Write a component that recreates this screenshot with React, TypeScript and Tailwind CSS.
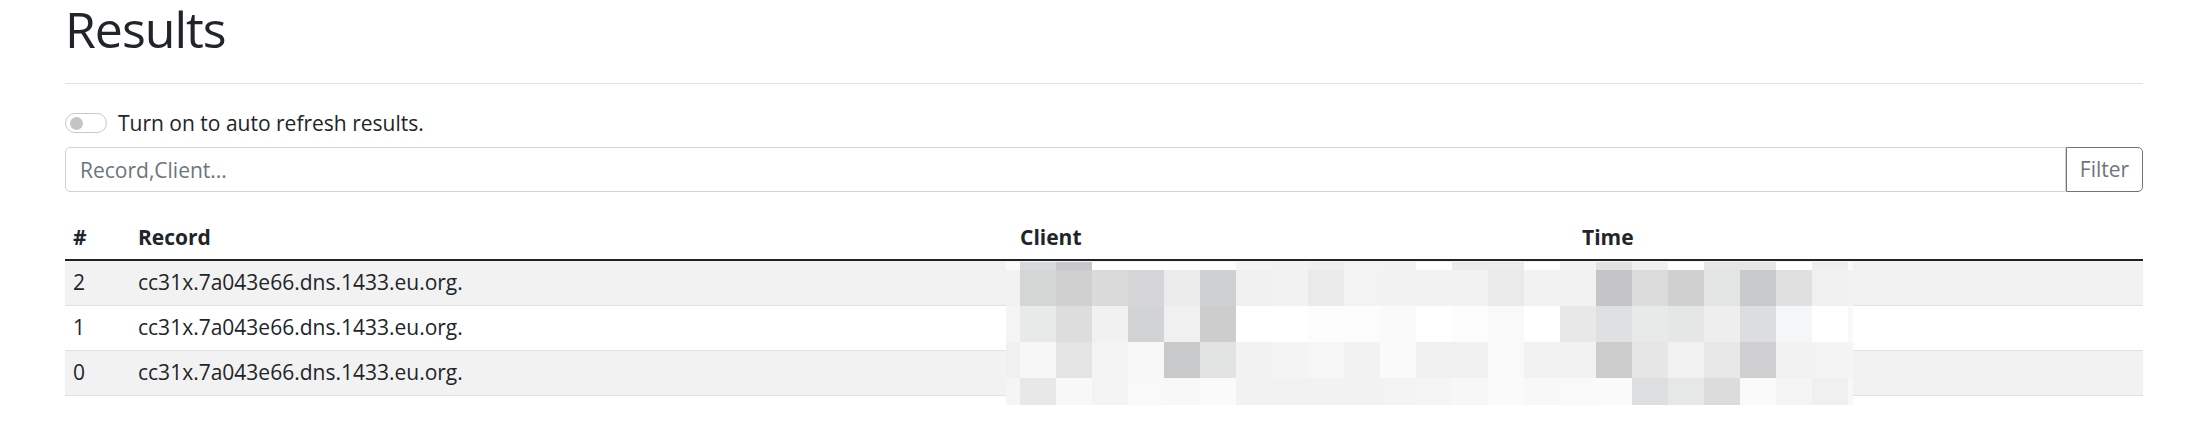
import { useState } from 'react';

// pixelated client/time area: left sliver, 23 cells, right sliver
const mosaic: string[][] = [
  ['fafafa', 'd8d9db', 'c8c8ca', 'ffffff', 'ffffff', 'ffffff', 'ffffff', 'f5f5f5', 'f3f3f3', 'efefef', 'f3f3f3', 'f3f3f3', 'ffffff', 'ececec', 'ececec', 'ffffff', 'f3f3f3', 'e2e2e2', 'f0f0f0', 'ffffff', 'e5e6e5', 'e6e6e6', 'ffffff', 'eeeeee', 'fafafa'],
  ['f2f2f2', 'd4d5d5', 'd0d0d0', 'dadada', 'd5d5d7', 'ececec', 'cfd0d2', 'f0f0f0', 'f2f2f2', 'eaeaea', 'f3f3f3', 'f2f2f2', 'f2f2f2', 'f2f2f2', 'eaeaea', 'f2f2f2', 'f2f2f2', 'c5c5c7', 'dcdcdc', 'd0d0d0', 'e3e5e4', 'c8c9cb', 'e0e0e0', 'f0f0f0', 'f2f2f2'],
  ['f5f5f5', 'e8eae9', 'dddddd', 'f0f1f0', 'd2d3d5', 'f0f0f0', 'cdcdcd', 'ffffff', 'ffffff', 'fcfcfc', 'fcfcfc', 'fafafa', 'ffffff', 'fcfcfc', 'f8f9f8', 'ffffff', 'e8e8e8', 'dfe0e2', 'e8eae9', 'e5e7e6', 'eeeeee', 'dcdde0', 'f5f6f8', 'ffffff', 'f8f9f8'],
  ['f0f0f0', 'f7f7f7', 'e4e4e4', 'f3f3f3', 'f8f8f8', 'c8c9cb', 'e2e4e3', 'f2f2f2', 'f4f4f4', 'f5f6f5', 'f2f2f2', 'fafafa', 'f0f0f0', 'f0f0f0', 'f8f9f8', 'f2f2f2', 'f2f2f2', 'cccccc', 'e6e6e6', 'f2f2f2', 'e8e8e8', 'cfcfd1', 'f2f2f2', 'f3f3f3', 'f5f5f5'],
  ['f5f5f5', 'e8e8e8', 'f8f8f8', 'f3f3f3', 'f8f9f8', 'f8f8f8', 'fafafa', 'f2f2f2', 'f2f2f2', 'f2f2f2', 'f2f2f2', 'f3f3f3', 'f5f5f5', 'f7f7f7', 'fafafa', 'f8f8f8', 'f8f9f8', 'fafafa', 'dddee0', 'e6e8e7', 'dcdcdc', 'fafafa', 'f5f5f5', 'f0f0f0', 'f8f8f8'],
];

const rows = [
  { id: 2, record: 'cc31x.7a043e66.dns.1433.eu.org.' },
  { id: 1, record: 'cc31x.7a043e66.dns.1433.eu.org.' },
  { id: 0, record: 'cc31x.7a043e66.dns.1433.eu.org.' },
];

export default function App() {
  const [auto, setAuto] = useState(false);
  const [query, setQuery] = useState('');

  return (
    <div className="min-h-[431px] bg-white pl-[65px] pr-[48px] font-['Open_Sans',sans-serif] text-[21px] text-[#212529]">
      <h1 className="h-[58px] text-[50px] font-normal leading-[58px] tracking-[-1px]">Results</h1>
      <hr className="mt-[25px] border-0 border-t border-[#e2e2e2]" />

      <div className="mt-[24px] flex h-[30px] items-center gap-[11px]">
        <button
          type="button"
          onClick={() => setAuto(!auto)}
          className="flex h-[20px] w-[42px] items-center rounded-full border border-[#c8c8c8] bg-white px-[4px]"
        >
          <span className="h-[13px] w-[13px] rounded-full bg-[#c4c4c4]" />
        </button>
        <span className="leading-[30px]">Turn on to auto refresh results.</span>
      </div>

      <div className="mt-[9px] flex h-[45px]">
        <input
          value={query}
          onChange={(e) => setQuery(e.target.value)}
          placeholder="Record,Client..."
          className="h-full flex-1 rounded-l-[5px] border border-[#ced4da] px-[14px] text-[21px] text-[#495057] outline-none placeholder:text-[#6c757d]"
        />
        <button
          type="button"
          className="h-full w-[77px] rounded-r-[5px] border border-[#6c757d] text-[21px] text-[#6c757d]"
        >
          Filter
        </button>
      </div>

      <div className="relative mt-[24px]">
        <table className="w-full table-fixed border-collapse text-left">
          <colgroup>
            <col className="w-[65px]" />
            <col className="w-[882px]" />
            <col className="w-[562px]" />
            <col />
          </colgroup>
          <thead>
            <tr className="h-[44px] border-b-2 border-[#212529]">
              <th className="px-[8px] font-bold">#</th>
              <th className="px-[8px] font-bold">Record</th>
              <th className="px-[8px] font-bold">Client</th>
              <th className="px-[8px] font-bold">Time</th>
            </tr>
          </thead>
          <tbody>
            {rows.map((r, i) => (
              <tr key={r.id} className={`h-[45px] border-b border-[#dee2e6] ${i % 2 === 0 ? 'bg-[#f2f2f2]' : 'bg-white'}`}>
                <td className="px-[8px]">{r.id}</td>
                <td className="px-[8px]">{r.record}</td>
                <td className="px-[8px]" />
                <td className="px-[8px]" />
              </tr>
            ))}
          </tbody>
        </table>

        <div className="absolute left-[941px] top-[46px] grid grid-cols-[14px_repeat(23,36px)_5px] grid-rows-[8px_repeat(3,36px)_27px]">
          {mosaic.flatMap((line, y) =>
            line.map((c, x) => <div key={`${y}-${x}`} style={{ backgroundColor: `#${c}` }} />)
          )}
        </div>
      </div>
    </div>
  );
}
